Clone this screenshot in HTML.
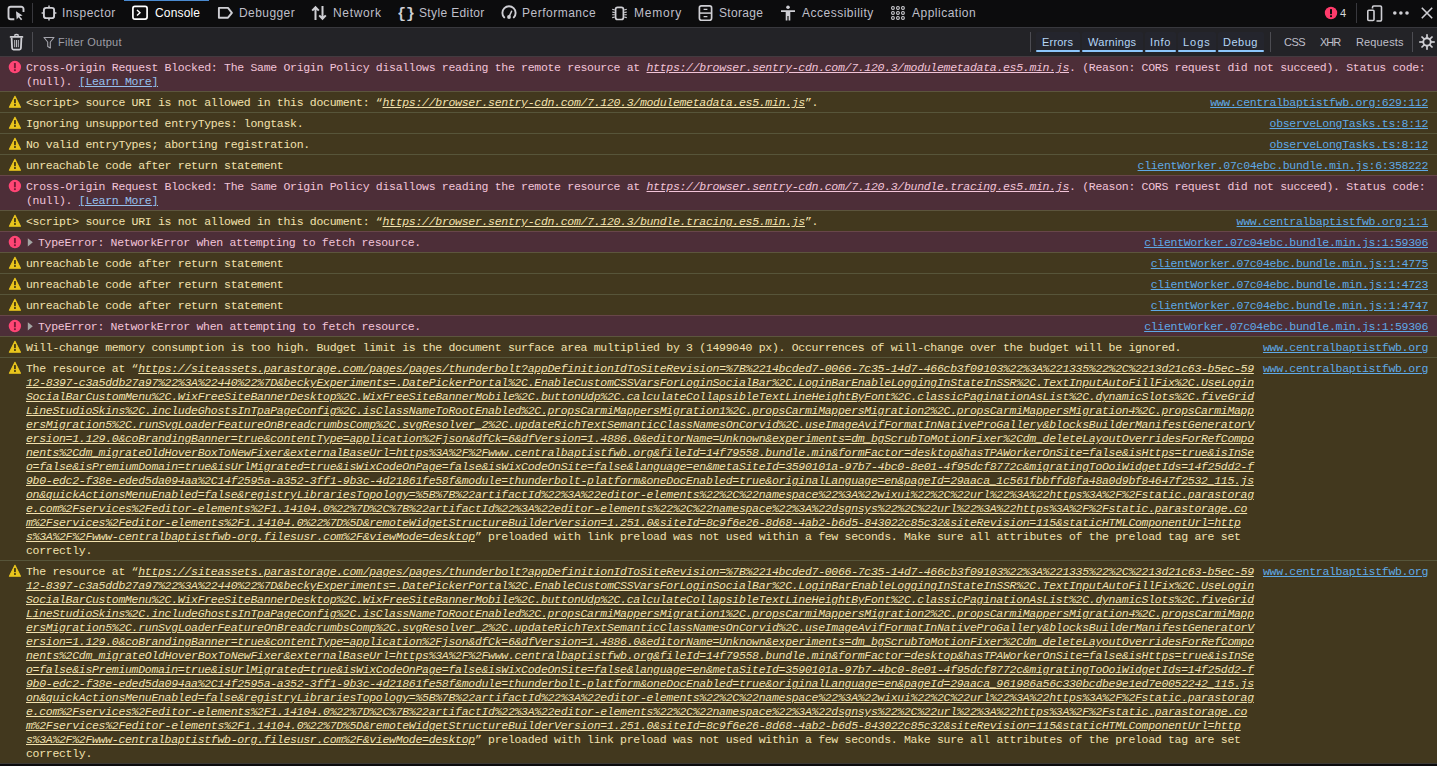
<!DOCTYPE html><html><head><meta charset="utf-8"><style>
*{margin:0;padding:0;box-sizing:border-box}
html,body{width:1437px;height:766px;overflow:hidden;background:#232327}
body{position:relative;font-family:"Liberation Sans",sans-serif}
.abs{position:absolute}
#tabs{position:absolute;left:0;top:0;width:1437px;height:28px;background:#0c0c0d;border-bottom:1px solid #38383d}
.tl{position:absolute;top:0;height:27px;line-height:27px;font-size:12px;color:#bfbfc9;white-space:pre}
.sep{position:absolute;width:1px;background:#38383d}
#fbar{position:absolute;left:0;top:28px;width:1437px;height:28px;background:#232327}
.fl{position:absolute;top:0;height:27px;line-height:28px;font-size:12px;white-space:pre}
.btn{position:absolute;top:32px;height:20px;background:#24252d;border-radius:2px}
.btn i{position:absolute;left:0;right:0;bottom:0;height:2px;background:#8cc6fb;border-radius:1px}
.row{position:absolute;left:0;width:1437px}
.ln{position:absolute;white-space:pre;font-family:"Liberation Mono",monospace;font-size:11.5px;letter-spacing:-0.3px;line-height:14px;height:14px}
.e{background:#4d2e38}
.w{background:#42381e}
.et{color:#f2c4d8}
.wt{color:#f3e2ae}
.u{font-style:italic;text-decoration:underline}
.loc{color:#5fa9e6;text-decoration:underline}
.lm{color:#95c0ee;text-decoration:underline}
</style></head><body>
<div id="tabs"></div>
<div class="abs" style="left:124px;top:0;width:85px;height:1px;background:#4a8ad0"></div>
<svg class="abs" style="left:0;top:0" width="40" height="28" viewBox="0 0 40 28">
<path d="M14.3 19.2H10.8a2.3 2.3 0 0 1-2.3-2.3V9a2.3 2.3 0 0 1 2.3-2.3h10.4a2.3 2.3 0 0 1 2.3 2.3V12" fill="none" stroke="#cfcfd4" stroke-width="1.9"/>
<path d="M16 11.2 L22.6 15.4 L19.6 16.3 L22.3 19.3 L21 20.2 L18.6 17.3 L16.7 19.6 Z" fill="#cfcfd4"/>
</svg>
<div class="sep" style="left:32px;top:3px;height:20px"></div>
<svg class="abs" style="left:41px;top:5px" width="16" height="16" viewBox="0 0 16 16"><rect x="2.9" y="2.9" width="10.2" height="10.2" rx="2.2" fill="none" stroke="#cfcfd4" stroke-width="1.9"/><path d="M8 0.6V2.5M8 13.5V15.4M0.6 8H2.5M13.5 8H15.4" stroke="#cfcfd4" stroke-width="1.5"/></svg>
<div class="tl" style="left:62px;color:#bfbfc9;letter-spacing:0.500px">Inspector</div>
<svg class="abs" style="left:132px;top:5px" width="16" height="16" viewBox="0 0 16 16"><rect x="0.9" y="1.4" width="14.2" height="12.7" rx="2" fill="none" stroke="#fff" stroke-width="1.7"/><path d="M5 5 L8 7.8 L5 10.6" fill="none" stroke="#fff" stroke-width="1.4"/></svg>
<div class="tl" style="left:155px;color:#ffffff;letter-spacing:0.167px">Console</div>
<svg class="abs" style="left:217px;top:5px" width="16" height="16" viewBox="0 0 16 16"><path d="M1.9 2.9H11L14.9 7.8L11 12.7H1.9Z" fill="none" stroke="#cfcfd4" stroke-width="1.9" stroke-linejoin="round"/></svg>
<div class="tl" style="left:239px;color:#bfbfc9;letter-spacing:0.429px">Debugger</div>
<svg class="abs" style="left:311px;top:5px" width="16" height="16" viewBox="0 0 16 16"><path d="M4.5 15V2.2M1.2 5.6L4.5 2.2L7.8 5.6M11.5 1V13.8M8.2 10.4L11.5 13.8L14.8 10.4" fill="none" stroke="#cfcfd4" stroke-width="2"/></svg>
<div class="tl" style="left:333px;color:#bfbfc9;letter-spacing:0.667px">Network</div>
<svg class="abs" style="left:398px;top:5px" width="16" height="16" viewBox="0 0 16 16"><text x="8" y="13" font-family="Liberation Mono" font-size="15" font-weight="bold" fill="#cfcfd4" text-anchor="middle">{}</text></svg>
<div class="tl" style="left:419px;color:#bfbfc9;letter-spacing:0.364px">Style Editor</div>
<svg class="abs" style="left:501px;top:5px" width="16" height="16" viewBox="0 0 16 16"><path d="M3.2 12.4A6.6 6.6 0 1 1 12.8 12.4" fill="none" stroke="#cfcfd4" stroke-width="1.9" stroke-linecap="round"/><path d="M8.1 11.6L10.6 6.2" stroke="#cfcfd4" stroke-width="1.5" stroke-linecap="round"/><circle cx="8" cy="12" r="1.9" fill="#cfcfd4"/></svg>
<div class="tl" style="left:522px;color:#bfbfc9;letter-spacing:0.500px">Performance</div>
<svg class="abs" style="left:611px;top:5px" width="16" height="16" viewBox="0 0 16 16"><rect x="4.6" y="2.3" width="7.8" height="12.2" rx="2" fill="none" stroke="#cfcfd4" stroke-width="1.7"/><path d="M1.2 4.2L3.8 5M1.2 7L3.8 7.6M1.2 9.8L3.8 9.8M1.2 12.6L3.8 12M15.8 4.2L13.2 5M15.8 7L13.2 7.6M15.8 9.8L13.2 9.8M15.8 12.6L13.2 12" stroke="#cfcfd4" stroke-width="1.1"/></svg>
<div class="tl" style="left:634px;color:#bfbfc9;letter-spacing:0.800px">Memory</div>
<svg class="abs" style="left:698px;top:5px" width="16" height="16" viewBox="0 0 16 16"><rect x="1.4" y="0.9" width="12.2" height="14.4" rx="2" fill="none" stroke="#cfcfd4" stroke-width="1.7"/><path d="M1.4 8.1H13.6" stroke="#cfcfd4" stroke-width="1.5"/><path d="M5.6 4.4H9.4M5.6 11.6H9.4" stroke="#cfcfd4" stroke-width="1.3"/></svg>
<div class="tl" style="left:719px;color:#bfbfc9;letter-spacing:0.333px">Storage</div>
<svg class="abs" style="left:780px;top:5px" width="16" height="16" viewBox="0 0 16 16"><circle cx="8" cy="2.3" r="1.8" fill="#cfcfd4"/><path d="M1 5.2H15V7H10.3V15.5H8.6V11H7.4V15.5H5.7V7H1Z" fill="#cfcfd4"/></svg>
<div class="tl" style="left:802px;color:#bfbfc9;letter-spacing:0.500px">Accessibility</div>
<svg class="abs" style="left:891px;top:5px" width="16" height="16" viewBox="0 0 16 16"><circle cx="1.95" cy="2.95" r="1.4" fill="none" stroke="#cfcfd4" stroke-width="1.1"/><circle cx="1.95" cy="7.95" r="1.4" fill="none" stroke="#cfcfd4" stroke-width="1.1"/><circle cx="1.95" cy="12.95" r="1.4" fill="none" stroke="#cfcfd4" stroke-width="1.1"/><circle cx="6.95" cy="2.95" r="1.4" fill="none" stroke="#cfcfd4" stroke-width="1.1"/><circle cx="6.95" cy="7.95" r="1.4" fill="none" stroke="#cfcfd4" stroke-width="1.1"/><circle cx="6.95" cy="12.95" r="1.4" fill="none" stroke="#cfcfd4" stroke-width="1.1"/><circle cx="11.95" cy="2.95" r="1.4" fill="none" stroke="#cfcfd4" stroke-width="1.1"/><circle cx="11.95" cy="7.95" r="1.4" fill="none" stroke="#cfcfd4" stroke-width="1.1"/><circle cx="11.95" cy="12.95" r="1.4" fill="none" stroke="#cfcfd4" stroke-width="1.1"/></svg>
<div class="tl" style="left:912px;color:#bfbfc9;letter-spacing:0.500px">Application</div>
<svg class="abs" style="left:1324px;top:6px" width="14" height="14" viewBox="0 0 14 14"><circle cx="7" cy="7" r="6.2" fill="#ff3b6b"/><rect x="6" y="3" width="2" height="5.2" rx="0.6" fill="#0c0c0d"/><rect x="6" y="9.3" width="2" height="1.8" fill="#0c0c0d"/></svg>
<div class="tl" style="left:1340px;top:0;color:#d7d7db;font-size:11px">4</div>
<div class="sep" style="left:1356px;top:3px;height:20px"></div>
<svg class="abs" style="left:1366px;top:5px" width="17" height="17" viewBox="0 0 17 17"><path d="M6.5 3.5V2.2a1.2 1.2 0 0 1 1.2-1.2h6.6a1.2 1.2 0 0 1 1.2 1.2v12.6a1.2 1.2 0 0 1-1.2 1.2H10.5" fill="none" stroke="#cfcfd4" stroke-width="1.6"/><rect x="1.8" y="5.2" width="6.2" height="10.3" rx="1" fill="none" stroke="#cfcfd4" stroke-width="1.6"/></svg>
<svg class="abs" style="left:1392px;top:9px" width="18" height="8" viewBox="0 0 18 8"><circle cx="2.8" cy="4" r="1.8" fill="#cfcfd4"/><circle cx="8.9" cy="4" r="1.8" fill="#cfcfd4"/><circle cx="15" cy="4" r="1.8" fill="#cfcfd4"/></svg>
<svg class="abs" style="left:1420px;top:6px" width="14" height="14" viewBox="0 0 14 14"><path d="M1.8 1.8L12.2 12.2M12.2 1.8L1.8 12.2" stroke="#cfcfd4" stroke-width="1.6"/></svg>
<div id="fbar"></div>
<svg class="abs" style="left:8px;top:33px" width="17" height="18" viewBox="0 0 17 18"><path d="M6.3 2.6Q8.5 0.4 10.7 2.6" fill="none" stroke="#cfcfd4" stroke-width="1.5"/><path d="M2.6 3.9H14.4" stroke="#cfcfd4" stroke-width="1.8" stroke-linecap="round"/><path d="M3.6 4.6L4.1 15.3Q4.2 16.6 5.5 16.6H11.5Q12.8 16.6 12.9 15.3L13.4 4.6" fill="none" stroke="#cfcfd4" stroke-width="1.8"/><path d="M6.7 7V14.2M8.5 7V14.2M10.3 7V14.2" stroke="#cfcfd4" stroke-width="0.9"/></svg>
<div class="sep" style="left:32px;top:32px;height:20px;background:#4c4c52"></div>
<svg class="abs" style="left:43px;top:36px" width="12" height="13" viewBox="0 0 12 13"><path d="M1 1.5H11L7.3 6V12L4.7 10.5V6Z" fill="none" stroke="#a5a5ad" stroke-width="1.1" stroke-linejoin="round"/></svg>
<div class="fl" style="left:58px;top:28px;color:#9d9da5;font-size:11px;letter-spacing:0.250px">Filter Output</div>
<div class="sep" style="left:1030px;top:32px;height:20px;background:#4c4c52"></div>
<div class="btn" style="left:1036px;width:44px"><i></i></div>
<div class="fl" style="left:1042px;top:28px;color:#b5d6f6;font-size:11px;letter-spacing:0.200px">Errors</div>
<div class="btn" style="left:1082px;width:61px"><i></i></div>
<div class="fl" style="left:1088px;top:28px;color:#b5d6f6;font-size:11px;letter-spacing:0.286px">Warnings</div>
<div class="btn" style="left:1145px;width:31px"><i></i></div>
<div class="fl" style="left:1150px;top:28px;color:#b5d6f6;font-size:11px;letter-spacing:0.667px">Info</div>
<div class="btn" style="left:1178px;width:38px"><i></i></div>
<div class="fl" style="left:1183px;top:28px;color:#b5d6f6;font-size:11px;letter-spacing:1.000px">Logs</div>
<div class="btn" style="left:1218px;width:46px"><i></i></div>
<div class="fl" style="left:1223px;top:28px;color:#b5d6f6;font-size:11px;letter-spacing:0.500px">Debug</div>
<div class="sep" style="left:1270px;top:32px;height:20px;background:#4c4c52"></div>
<div class="fl" style="left:1284px;top:28px;color:#bfbfc9;font-size:11px;letter-spacing:-0.500px">CSS</div>
<div class="fl" style="left:1320px;top:28px;color:#bfbfc9;font-size:11px;letter-spacing:-1.000px">XHR</div>
<div class="fl" style="left:1356px;top:28px;color:#bfbfc9;font-size:11px;letter-spacing:0.143px">Requests</div>
<div class="sep" style="left:1412px;top:32px;height:20px;background:#4c4c52"></div>
<svg class="abs" style="left:1419px;top:34px" width="16" height="16" viewBox="0 0 16 16"><circle cx="8" cy="8" r="3.75" fill="none" stroke="#cfcfd4" stroke-width="1.9"/><rect x="7.15" y="0.2" width="1.7" height="4.2" fill="#cfcfd4" transform="rotate(0 8 8)"/><rect x="7.15" y="0.2" width="1.7" height="4.2" fill="#cfcfd4" transform="rotate(45 8 8)"/><rect x="7.15" y="0.2" width="1.7" height="4.2" fill="#cfcfd4" transform="rotate(90 8 8)"/><rect x="7.15" y="0.2" width="1.7" height="4.2" fill="#cfcfd4" transform="rotate(135 8 8)"/><rect x="7.15" y="0.2" width="1.7" height="4.2" fill="#cfcfd4" transform="rotate(180 8 8)"/><rect x="7.15" y="0.2" width="1.7" height="4.2" fill="#cfcfd4" transform="rotate(225 8 8)"/><rect x="7.15" y="0.2" width="1.7" height="4.2" fill="#cfcfd4" transform="rotate(270 8 8)"/><rect x="7.15" y="0.2" width="1.7" height="4.2" fill="#cfcfd4" transform="rotate(315 8 8)"/></svg>
<div class="row e" style="top:56px;height:36px"></div>
<div class="row" style="top:56px;height:1px;background:#433a3f"></div>
<svg class="abs" style="left:8px;top:60px" width="14" height="14" viewBox="0 0 14 14"><circle cx="6.9" cy="7.05" r="6.2" fill="#ff4575"/><rect x="5.95" y="3" width="1.9" height="5.3" rx="0.5" fill="#7a1a36"/><rect x="5.95" y="9.3" width="1.9" height="1.8" fill="#7a1a36"/></svg>
<div class="ln et" style="left:26px;top:61px">Cross-Origin Request Blocked: The Same Origin Policy disallows reading the remote resource at <span class="u">https://browser.sentry-cdn.com/7.120.3/modulemetadata.es5.min.js</span>. (Reason: CORS request did not succeed). Status code:</div>
<div class="ln et" style="left:26px;top:75px">(null). <span class="lm">[Learn More]</span></div>
<div class="row w" style="top:91px;height:22px"></div>
<div class="row" style="top:91px;height:1px;background:#5c553d"></div>
<svg class="abs" style="left:8px;top:95px" width="14" height="14" viewBox="0 0 14 14"><path d="M6.95 1.3L12.5 12.3H1.4Z" fill="#e9c51d" stroke="#e9c51d" stroke-width="1.1" stroke-linejoin="round"/><rect x="6" y="4.1" width="1.9" height="4.1" fill="#4a3d12"/><rect x="6" y="9.1" width="1.9" height="1.8" fill="#4a3d12"/></svg>
<div class="ln wt" style="left:26px;top:96px">&lt;script&gt; source URI is not allowed in this document: “<span class="u">https://browser.sentry-cdn.com/7.120.3/modulemetadata.es5.min.js</span>”.</div>
<div class="ln loc" style="right:9px;top:96px">www.centralbaptistfwb.org:629:112</div>
<div class="row w" style="top:112px;height:22px"></div>
<div class="row" style="top:112px;height:1px;background:#57553a"></div>
<svg class="abs" style="left:8px;top:116px" width="14" height="14" viewBox="0 0 14 14"><path d="M6.95 1.3L12.5 12.3H1.4Z" fill="#e9c51d" stroke="#e9c51d" stroke-width="1.1" stroke-linejoin="round"/><rect x="6" y="4.1" width="1.9" height="4.1" fill="#4a3d12"/><rect x="6" y="9.1" width="1.9" height="1.8" fill="#4a3d12"/></svg>
<div class="ln wt" style="left:26px;top:117px">Ignoring unsupported entryTypes: longtask.</div>
<div class="ln loc" style="right:9px;top:117px">observeLongTasks.ts:8:12</div>
<div class="row w" style="top:133px;height:22px"></div>
<div class="row" style="top:133px;height:1px;background:#57553a"></div>
<svg class="abs" style="left:8px;top:137px" width="14" height="14" viewBox="0 0 14 14"><path d="M6.95 1.3L12.5 12.3H1.4Z" fill="#e9c51d" stroke="#e9c51d" stroke-width="1.1" stroke-linejoin="round"/><rect x="6" y="4.1" width="1.9" height="4.1" fill="#4a3d12"/><rect x="6" y="9.1" width="1.9" height="1.8" fill="#4a3d12"/></svg>
<div class="ln wt" style="left:26px;top:138px">No valid entryTypes; aborting registration.</div>
<div class="ln loc" style="right:9px;top:138px">observeLongTasks.ts:8:12</div>
<div class="row w" style="top:154px;height:22px"></div>
<div class="row" style="top:154px;height:1px;background:#57553a"></div>
<svg class="abs" style="left:8px;top:158px" width="14" height="14" viewBox="0 0 14 14"><path d="M6.95 1.3L12.5 12.3H1.4Z" fill="#e9c51d" stroke="#e9c51d" stroke-width="1.1" stroke-linejoin="round"/><rect x="6" y="4.1" width="1.9" height="4.1" fill="#4a3d12"/><rect x="6" y="9.1" width="1.9" height="1.8" fill="#4a3d12"/></svg>
<div class="ln wt" style="left:26px;top:159px">unreachable code after return statement</div>
<div class="ln loc" style="right:9px;top:159px">clientWorker.07c04ebc.bundle.min.js:6:358222</div>
<div class="row e" style="top:175px;height:36px"></div>
<div class="row" style="top:175px;height:1px;background:#684649"></div>
<svg class="abs" style="left:8px;top:179px" width="14" height="14" viewBox="0 0 14 14"><circle cx="6.9" cy="7.05" r="6.2" fill="#ff4575"/><rect x="5.95" y="3" width="1.9" height="5.3" rx="0.5" fill="#7a1a36"/><rect x="5.95" y="9.3" width="1.9" height="1.8" fill="#7a1a36"/></svg>
<div class="ln et" style="left:26px;top:180px">Cross-Origin Request Blocked: The Same Origin Policy disallows reading the remote resource at <span class="u">https://browser.sentry-cdn.com/7.120.3/bundle.tracing.es5.min.js</span>. (Reason: CORS request did not succeed). Status code:</div>
<div class="ln et" style="left:26px;top:194px">(null). <span class="lm">[Learn More]</span></div>
<div class="row w" style="top:210px;height:22px"></div>
<div class="row" style="top:210px;height:1px;background:#5c553d"></div>
<svg class="abs" style="left:8px;top:214px" width="14" height="14" viewBox="0 0 14 14"><path d="M6.95 1.3L12.5 12.3H1.4Z" fill="#e9c51d" stroke="#e9c51d" stroke-width="1.1" stroke-linejoin="round"/><rect x="6" y="4.1" width="1.9" height="4.1" fill="#4a3d12"/><rect x="6" y="9.1" width="1.9" height="1.8" fill="#4a3d12"/></svg>
<div class="ln wt" style="left:26px;top:215px">&lt;script&gt; source URI is not allowed in this document: “<span class="u">https://browser.sentry-cdn.com/7.120.3/bundle.tracing.es5.min.js</span>”.</div>
<div class="ln loc" style="right:9px;top:215px">www.centralbaptistfwb.org:1:1</div>
<div class="row e" style="top:231px;height:22px"></div>
<div class="row" style="top:231px;height:1px;background:#684649"></div>
<svg class="abs" style="left:8px;top:235px" width="14" height="14" viewBox="0 0 14 14"><circle cx="6.9" cy="7.05" r="6.2" fill="#ff4575"/><rect x="5.95" y="3" width="1.9" height="5.3" rx="0.5" fill="#7a1a36"/><rect x="5.95" y="9.3" width="1.9" height="1.8" fill="#7a1a36"/></svg>
<svg class="abs" style="left:26px;top:237px" width="8" height="11" viewBox="0 0 8 11"><path d="M1.8 1.2L6.8 5.3L1.8 9.4Z" fill="#a3a6a4"/></svg>
<div class="ln et" style="left:38px;top:236px">TypeError: NetworkError when attempting to fetch resource.</div>
<div class="ln loc" style="right:9px;top:236px">clientWorker.07c04ebc.bundle.min.js:1:59306</div>
<div class="row w" style="top:252px;height:22px"></div>
<div class="row" style="top:252px;height:1px;background:#5c553d"></div>
<svg class="abs" style="left:8px;top:256px" width="14" height="14" viewBox="0 0 14 14"><path d="M6.95 1.3L12.5 12.3H1.4Z" fill="#e9c51d" stroke="#e9c51d" stroke-width="1.1" stroke-linejoin="round"/><rect x="6" y="4.1" width="1.9" height="4.1" fill="#4a3d12"/><rect x="6" y="9.1" width="1.9" height="1.8" fill="#4a3d12"/></svg>
<div class="ln wt" style="left:26px;top:257px">unreachable code after return statement</div>
<div class="ln loc" style="right:9px;top:257px">clientWorker.07c04ebc.bundle.min.js:1:4775</div>
<div class="row w" style="top:273px;height:22px"></div>
<div class="row" style="top:273px;height:1px;background:#57553a"></div>
<svg class="abs" style="left:8px;top:277px" width="14" height="14" viewBox="0 0 14 14"><path d="M6.95 1.3L12.5 12.3H1.4Z" fill="#e9c51d" stroke="#e9c51d" stroke-width="1.1" stroke-linejoin="round"/><rect x="6" y="4.1" width="1.9" height="4.1" fill="#4a3d12"/><rect x="6" y="9.1" width="1.9" height="1.8" fill="#4a3d12"/></svg>
<div class="ln wt" style="left:26px;top:278px">unreachable code after return statement</div>
<div class="ln loc" style="right:9px;top:278px">clientWorker.07c04ebc.bundle.min.js:1:4723</div>
<div class="row w" style="top:294px;height:22px"></div>
<div class="row" style="top:294px;height:1px;background:#57553a"></div>
<svg class="abs" style="left:8px;top:298px" width="14" height="14" viewBox="0 0 14 14"><path d="M6.95 1.3L12.5 12.3H1.4Z" fill="#e9c51d" stroke="#e9c51d" stroke-width="1.1" stroke-linejoin="round"/><rect x="6" y="4.1" width="1.9" height="4.1" fill="#4a3d12"/><rect x="6" y="9.1" width="1.9" height="1.8" fill="#4a3d12"/></svg>
<div class="ln wt" style="left:26px;top:299px">unreachable code after return statement</div>
<div class="ln loc" style="right:9px;top:299px">clientWorker.07c04ebc.bundle.min.js:1:4747</div>
<div class="row e" style="top:315px;height:22px"></div>
<div class="row" style="top:315px;height:1px;background:#684649"></div>
<svg class="abs" style="left:8px;top:319px" width="14" height="14" viewBox="0 0 14 14"><circle cx="6.9" cy="7.05" r="6.2" fill="#ff4575"/><rect x="5.95" y="3" width="1.9" height="5.3" rx="0.5" fill="#7a1a36"/><rect x="5.95" y="9.3" width="1.9" height="1.8" fill="#7a1a36"/></svg>
<svg class="abs" style="left:26px;top:321px" width="8" height="11" viewBox="0 0 8 11"><path d="M1.8 1.2L6.8 5.3L1.8 9.4Z" fill="#a3a6a4"/></svg>
<div class="ln et" style="left:38px;top:320px">TypeError: NetworkError when attempting to fetch resource.</div>
<div class="ln loc" style="right:9px;top:320px">clientWorker.07c04ebc.bundle.min.js:1:59306</div>
<div class="row w" style="top:336px;height:22px"></div>
<div class="row" style="top:336px;height:1px;background:#5c553d"></div>
<svg class="abs" style="left:8px;top:340px" width="14" height="14" viewBox="0 0 14 14"><path d="M6.95 1.3L12.5 12.3H1.4Z" fill="#e9c51d" stroke="#e9c51d" stroke-width="1.1" stroke-linejoin="round"/><rect x="6" y="4.1" width="1.9" height="4.1" fill="#4a3d12"/><rect x="6" y="9.1" width="1.9" height="1.8" fill="#4a3d12"/></svg>
<div class="ln wt" style="left:26px;top:341px">Will-change memory consumption is too high. Budget limit is the document surface area multiplied by 3 (1499040 px). Occurrences of will-change over the budget will be ignored.</div>
<div class="ln loc" style="right:9px;top:341px">www.centralbaptistfwb.org</div>
<div class="row w" style="top:357px;height:204px"></div>
<div class="row" style="top:357px;height:1px;background:#57553a"></div>
<svg class="abs" style="left:8px;top:361px" width="14" height="14" viewBox="0 0 14 14"><path d="M6.95 1.3L12.5 12.3H1.4Z" fill="#e9c51d" stroke="#e9c51d" stroke-width="1.1" stroke-linejoin="round"/><rect x="6" y="4.1" width="1.9" height="4.1" fill="#4a3d12"/><rect x="6" y="9.1" width="1.9" height="1.8" fill="#4a3d12"/></svg>
<div class="ln wt" style="left:26px;top:362px">The resource at “<span class="u">https://siteassets.parastorage.com/pages/pages/thunderbolt?appDefinitionIdToSiteRevision=%7B%2214bcded7-0066-7c35-14d7-466cb3f09103%22%3A%221335%22%2C%2213d21c63-b5ec-59</span></div>
<div class="ln wt" style="left:26px;top:376px"><span class="u">12-8397-c3a5ddb27a97%22%3A%22440%22%7D&amp;beckyExperiments=.DatePickerPortal%2C.EnableCustomCSSVarsForLoginSocialBar%2C.LoginBarEnableLoggingInStateInSSR%2C.TextInputAutoFillFix%2C.UseLogin</span></div>
<div class="ln wt" style="left:26px;top:390px"><span class="u">SocialBarCustomMenu%2C.WixFreeSiteBannerDesktop%2C.WixFreeSiteBannerMobile%2C.buttonUdp%2C.calculateCollapsibleTextLineHeightByFont%2C.classicPaginationAsList%2C.dynamicSlots%2C.fiveGrid</span></div>
<div class="ln wt" style="left:26px;top:404px"><span class="u">LineStudioSkins%2C.includeGhostsInTpaPageConfig%2C.isClassNameToRootEnabled%2C.propsCarmiMappersMigration1%2C.propsCarmiMappersMigration2%2C.propsCarmiMappersMigration4%2C.propsCarmiMapp</span></div>
<div class="ln wt" style="left:26px;top:418px"><span class="u">ersMigration5%2C.runSvgLoaderFeatureOnBreadcrumbsComp%2C.svgResolver_2%2C.updateRichTextSemanticClassNamesOnCorvid%2C.useImageAvifFormatInNativeProGallery&amp;blocksBuilderManifestGeneratorV</span></div>
<div class="ln wt" style="left:26px;top:432px"><span class="u">ersion=1.129.0&amp;coBrandingBanner=true&amp;contentType=application%2Fjson&amp;dfCk=6&amp;dfVersion=1.4886.0&amp;editorName=Unknown&amp;experiments=dm_bgScrubToMotionFixer%2Cdm_deleteLayoutOverridesForRefCompo</span></div>
<div class="ln wt" style="left:26px;top:446px"><span class="u">nents%2Cdm_migrateOldHoverBoxToNewFixer&amp;externalBaseUrl=https%3A%2F%2Fwww.centralbaptistfwb.org&amp;fileId=14f79558.bundle.min&amp;formFactor=desktop&amp;hasTPAWorkerOnSite=false&amp;isHttps=true&amp;isInSe</span></div>
<div class="ln wt" style="left:26px;top:460px"><span class="u">o=false&amp;isPremiumDomain=true&amp;isUrlMigrated=true&amp;isWixCodeOnPage=false&amp;isWixCodeOnSite=false&amp;language=en&amp;metaSiteId=3590101a-97b7-4bc0-8e01-4f95dcf8772c&amp;migratingToOoiWidgetIds=14f25dd2-f</span></div>
<div class="ln wt" style="left:26px;top:474px"><span class="u">9b0-edc2-f38e-eded5da094aa%2C14f2595a-a352-3ff1-9b3c-4d21861fe58f&amp;module=thunderbolt-platform&amp;oneDocEnabled=true&amp;originalLanguage=en&amp;pageId=29aaca_1c561fbbffd8fa48a0d9bf84647f2532_115.js</span></div>
<div class="ln wt" style="left:26px;top:488px"><span class="u">on&amp;quickActionsMenuEnabled=false&amp;registryLibrariesTopology=%5B%7B%22artifactId%22%3A%22editor-elements%22%2C%22namespace%22%3A%22wixui%22%2C%22url%22%3A%22https%3A%2F%2Fstatic.parastorag</span></div>
<div class="ln wt" style="left:26px;top:502px"><span class="u">e.com%2Fservices%2Feditor-elements%2F1.14104.0%22%7D%2C%7B%22artifactId%22%3A%22editor-elements%22%2C%22namespace%22%3A%22dsgnsys%22%2C%22url%22%3A%22https%3A%2F%2Fstatic.parastorage.co</span></div>
<div class="ln wt" style="left:26px;top:516px"><span class="u">m%2Fservices%2Feditor-elements%2F1.14104.0%22%7D%5D&amp;remoteWidgetStructureBuilderVersion=1.251.0&amp;siteId=8c9f6e26-8d68-4ab2-b6d5-843022c85c32&amp;siteRevision=115&amp;staticHTMLComponentUrl=http</span></div>
<div class="ln wt" style="left:26px;top:530px"><span class="u">s%3A%2F%2Fwww-centralbaptistfwb-org.filesusr.com%2F&amp;viewMode=desktop</span>” preloaded with link preload was not used within a few seconds. Make sure all attributes of the preload tag are set</div>
<div class="ln wt" style="left:26px;top:544px">correctly.</div>
<div class="ln loc" style="right:9px;top:362px">www.centralbaptistfwb.org</div>
<div class="row w" style="top:560px;height:204px"></div>
<div class="row" style="top:560px;height:1px;background:#57553a"></div>
<svg class="abs" style="left:8px;top:564px" width="14" height="14" viewBox="0 0 14 14"><path d="M6.95 1.3L12.5 12.3H1.4Z" fill="#e9c51d" stroke="#e9c51d" stroke-width="1.1" stroke-linejoin="round"/><rect x="6" y="4.1" width="1.9" height="4.1" fill="#4a3d12"/><rect x="6" y="9.1" width="1.9" height="1.8" fill="#4a3d12"/></svg>
<div class="ln wt" style="left:26px;top:565px">The resource at “<span class="u">https://siteassets.parastorage.com/pages/pages/thunderbolt?appDefinitionIdToSiteRevision=%7B%2214bcded7-0066-7c35-14d7-466cb3f09103%22%3A%221335%22%2C%2213d21c63-b5ec-59</span></div>
<div class="ln wt" style="left:26px;top:579px"><span class="u">12-8397-c3a5ddb27a97%22%3A%22440%22%7D&amp;beckyExperiments=.DatePickerPortal%2C.EnableCustomCSSVarsForLoginSocialBar%2C.LoginBarEnableLoggingInStateInSSR%2C.TextInputAutoFillFix%2C.UseLogin</span></div>
<div class="ln wt" style="left:26px;top:593px"><span class="u">SocialBarCustomMenu%2C.WixFreeSiteBannerDesktop%2C.WixFreeSiteBannerMobile%2C.buttonUdp%2C.calculateCollapsibleTextLineHeightByFont%2C.classicPaginationAsList%2C.dynamicSlots%2C.fiveGrid</span></div>
<div class="ln wt" style="left:26px;top:607px"><span class="u">LineStudioSkins%2C.includeGhostsInTpaPageConfig%2C.isClassNameToRootEnabled%2C.propsCarmiMappersMigration1%2C.propsCarmiMappersMigration2%2C.propsCarmiMappersMigration4%2C.propsCarmiMapp</span></div>
<div class="ln wt" style="left:26px;top:621px"><span class="u">ersMigration5%2C.runSvgLoaderFeatureOnBreadcrumbsComp%2C.svgResolver_2%2C.updateRichTextSemanticClassNamesOnCorvid%2C.useImageAvifFormatInNativeProGallery&amp;blocksBuilderManifestGeneratorV</span></div>
<div class="ln wt" style="left:26px;top:635px"><span class="u">ersion=1.129.0&amp;coBrandingBanner=true&amp;contentType=application%2Fjson&amp;dfCk=6&amp;dfVersion=1.4886.0&amp;editorName=Unknown&amp;experiments=dm_bgScrubToMotionFixer%2Cdm_deleteLayoutOverridesForRefCompo</span></div>
<div class="ln wt" style="left:26px;top:649px"><span class="u">nents%2Cdm_migrateOldHoverBoxToNewFixer&amp;externalBaseUrl=https%3A%2F%2Fwww.centralbaptistfwb.org&amp;fileId=14f79558.bundle.min&amp;formFactor=desktop&amp;hasTPAWorkerOnSite=false&amp;isHttps=true&amp;isInSe</span></div>
<div class="ln wt" style="left:26px;top:663px"><span class="u">o=false&amp;isPremiumDomain=true&amp;isUrlMigrated=true&amp;isWixCodeOnPage=false&amp;isWixCodeOnSite=false&amp;language=en&amp;metaSiteId=3590101a-97b7-4bc0-8e01-4f95dcf8772c&amp;migratingToOoiWidgetIds=14f25dd2-f</span></div>
<div class="ln wt" style="left:26px;top:677px"><span class="u">9b0-edc2-f38e-eded5da094aa%2C14f2595a-a352-3ff1-9b3c-4d21861fe58f&amp;module=thunderbolt-platform&amp;oneDocEnabled=true&amp;originalLanguage=en&amp;pageId=29aaca_961986a56c330bcdbe9e1ed7e0052242_115.js</span></div>
<div class="ln wt" style="left:26px;top:691px"><span class="u">on&amp;quickActionsMenuEnabled=false&amp;registryLibrariesTopology=%5B%7B%22artifactId%22%3A%22editor-elements%22%2C%22namespace%22%3A%22wixui%22%2C%22url%22%3A%22https%3A%2F%2Fstatic.parastorag</span></div>
<div class="ln wt" style="left:26px;top:705px"><span class="u">e.com%2Fservices%2Feditor-elements%2F1.14104.0%22%7D%2C%7B%22artifactId%22%3A%22editor-elements%22%2C%22namespace%22%3A%22dsgnsys%22%2C%22url%22%3A%22https%3A%2F%2Fstatic.parastorage.co</span></div>
<div class="ln wt" style="left:26px;top:719px"><span class="u">m%2Fservices%2Feditor-elements%2F1.14104.0%22%7D%5D&amp;remoteWidgetStructureBuilderVersion=1.251.0&amp;siteId=8c9f6e26-8d68-4ab2-b6d5-843022c85c32&amp;siteRevision=115&amp;staticHTMLComponentUrl=http</span></div>
<div class="ln wt" style="left:26px;top:733px"><span class="u">s%3A%2F%2Fwww-centralbaptistfwb-org.filesusr.com%2F&amp;viewMode=desktop</span>” preloaded with link preload was not used within a few seconds. Make sure all attributes of the preload tag are set</div>
<div class="ln wt" style="left:26px;top:747px">correctly.</div>
<div class="ln loc" style="right:9px;top:565px">www.centralbaptistfwb.org</div>
<div class="row" style="top:763px;height:1px;background:#3e3b37"></div>
<div class="row" style="top:764px;height:2px;background:#0b0b0d"></div>
</body></html>
